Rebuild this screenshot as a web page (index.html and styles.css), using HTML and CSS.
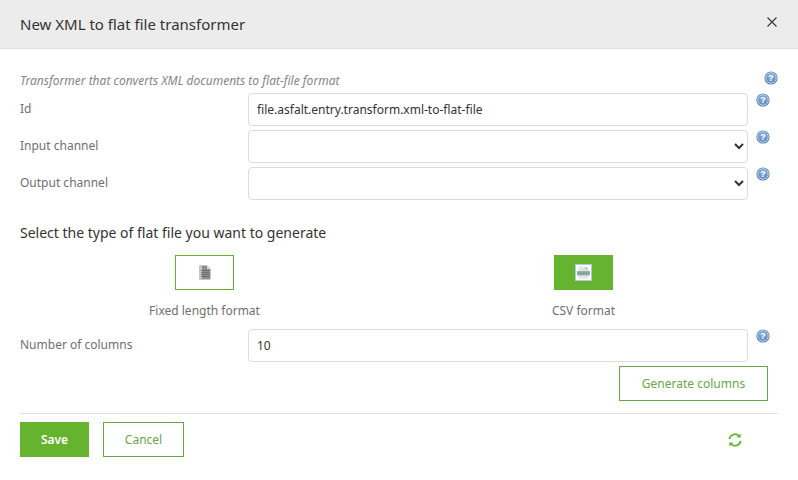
FILE: index.html
```html
<!DOCTYPE html>
<html lang="en">
<head>
  <meta charset="UTF-8">
  <meta name="viewport" content="width=device-width, initial-scale=1.0">
  <title>New XML to flat file transformer</title>
  <link rel="stylesheet" href="styles.css">
</head>
<body>
  <svg class="defs" width="0" height="0">
    <defs>
      <radialGradient id="helpfill" cx="50%" cy="40%" r="60%">
        <stop offset="0" stop-color="#8fb0dc"/>
        <stop offset="1" stop-color="#4f7fb8"/>
      </radialGradient>
      <symbol id="help" viewBox="0 0 14 14">
        <circle cx="7" cy="7" r="6.6" fill="url(#helpfill)"/>
        <circle cx="7" cy="7" r="5.2" fill="none" stroke="#c9daf0" stroke-width="0.9"/>
        <text x="7" y="10.3" text-anchor="middle" class="help-mark">?</text>
      </symbol>
    </defs>
  </svg>

  <header class="modal-head">
    <h1>New XML to flat file transformer</h1>
    <svg class="close" width="10" height="10" viewBox="0 0 10 10"><path d="M0.5 0.5L9.5 9.5M9.5 0.5L0.5 9.5" stroke="#333" stroke-width="1.1" fill="none"/></svg>
  </header>

  <main class="modal-body">
    <div class="desc-row">
      <p class="desc">Transformer that converts XML documents to flat-file format</p>
      <svg class="help"><use href="#help"/></svg>
    </div>

    <div class="row">
      <label>Id</label>
      <input class="field" type="text" value="file.asfalt.entry.transform.xml-to-flat-file">
      <svg class="help"><use href="#help"/></svg>
    </div>
    <div class="row">
      <label>Input channel</label>
      <select class="field"><option></option></select>
      <svg class="help"><use href="#help"/></svg>
    </div>
    <div class="row">
      <label>Output channel</label>
      <select class="field"><option></option></select>
      <svg class="help"><use href="#help"/></svg>
    </div>

    <h2>Select the type of flat file you want to generate</h2>

    <div class="types">
      <div class="type">
        <div class="type-btn">
          <svg width="12" height="15" viewBox="0 0 12 15">
            <path d="M0.5 0.5H8L11.5 4V14.5H0.5Z" fill="#8e8e8e"/>
            <path d="M8 0.5L11.5 4H8Z" fill="#d8d8d8"/>
            <path d="M0.5 0.5H3V14.5H0.5Z" fill="#c4c4c4"/>
            <path d="M2 5.5H10.5M2 7.5H10.5M2 9.5H10.5M2 11.5H10.5" stroke="#6a6a6a" stroke-width="0.8"/>
          </svg>
        </div>
        <span>Fixed length format</span>
      </div>
      <div class="type">
        <div class="type-btn active">
          <svg width="17" height="17" viewBox="0 0 17 17">
            <rect x="0.5" y="0.5" width="16" height="16" fill="#fff" stroke="#b4c4ec"/>
            <path d="M3.5 2.5H10.5L13.5 5.5V14.5H3.5Z" fill="#e4e4e4"/>
            <path d="M10.5 2.5L13.5 5.5H10.5Z" fill="#b5b5b5"/>
            <rect x="2" y="7" width="13" height="4.5" fill="#8fb5ad"/>
            <path d="M3 9.2H14" stroke="#4f7f78" stroke-width="1" stroke-dasharray="1.5 1"/>
          </svg>
        </div>
        <span>CSV format</span>
      </div>
    </div>

    <div class="row">
      <label>Number of columns</label>
      <input class="field" type="text" value="10">
      <svg class="help"><use href="#help"/></svg>
    </div>

    <div class="generate-bar">
      <button class="btn btn-line generate">Generate columns</button>
    </div>

    <footer class="modal-foot">
      <button class="btn btn-main">Save</button>
      <button class="btn btn-line cancel">Cancel</button>
      <svg class="refresh" width="14" height="14" viewBox="0 0 14 14" fill="none" stroke="#65b32e" stroke-width="1.7">
        <path d="M1.4 6A5.6 5.6 0 0 1 11.2 3.2"/>
        <path d="M12.6 8A5.6 5.6 0 0 1 2.8 10.8"/>
        <path d="M12.6 0.6V4.6H8.6Z" fill="#65b32e" stroke="none"/>
        <path d="M1.4 13.4V9.4H5.4Z" fill="#65b32e" stroke="none"/>
      </svg>
    </footer>
  </main>
</body>
</html>
```

FILE: styles.css
```css
*{margin: 0px; padding: 0px; box-sizing: border-box;}
body{
  width: 798px; height: 480px;
  background: #fff;
  font-family: "Noto Sans", "Open Sans", sans-serif;
  font-size: 12px;
  color: #6f6f6f;
  overflow: hidden;
}
.defs{position: absolute;}
.help-mark{font: bold 9.5px "Liberation Sans", sans-serif; fill: #fff;}

/* header */
.modal-head{
  height: 49px;
  padding: 0 21px 0 20px;
  background: #ececec;
  border-bottom: 1px solid #dfdfdf;
  display: flex;
  align-items: center;
  justify-content: space-between;
}
.modal-head h1{font-size: 15px; font-weight: 400; color: #333;}
.close{margin-top: -5px;}

.modal-body{padding: 22px 20px 0;}

/* description */
.desc-row{
  height: 22px;
  display: flex;
  justify-content: space-between;
}
.desc{font-size: 12px; font-style: italic; color: #858585; padding-top: 1px;}

/* form rows */
.row{
  height: 33px;
  margin-bottom: 4px;
  display: flex;
  align-items: flex-start;
}
.row label{width: 228px; padding-top: 7px; color: #6f6f6f;}
.field{
  width: 500px; height: 33px;
  padding: 0 8px;
  background: #fff;
  border: 1px solid #dcdcdc;
  border-radius: 4px;
  font-family: inherit;
  font-size: 12px;
  color: #333;
}
.help{width: 14px; height: 14px; margin-left: 8px;}
.desc-row .help{margin-top: 0;}
.row .help{margin-top: 0;}

h2{
  margin-top: 23px;
  font-size: 14px; font-weight: 400;
  color: #333;
}

/* file type choice */
.types{
  width: 758px;
  margin: 13px 0 10px -5px;
  display: grid;
  grid-template-columns: 1fr 1fr;
}
.type{
  display: flex;
  flex-direction: column;
  align-items: center;
  gap: 12px;
}
.type-btn{
  width: 59px; height: 35px;
  border: 1px solid #65b32e;
  display: flex;
  align-items: center;
  justify-content: center;
}
.type-btn.active{background: #65b32e;}

/* buttons */
.btn{
  height: 35px;
  font-family: inherit;
  font-size: 12px;
  background: #fff;
  border: 1px solid #65a845;
  color: #65a845;
}
.btn-main{width: 69px; background: #65b32e; border-color: #65b32e; color: #fff; font-weight: 600;}
.cancel{width: 81px; margin-left: 14px;}
.generate{width: 149px;}
.generate-bar{
  width: 748px;
  display: flex;
  justify-content: flex-end;
}

.modal-foot{
  margin-top: 12px;
  padding-top: 8px;
  border-top: 1px solid #dfdfdf;
  display: flex;
  align-items: center;
  position: relative;
}
.refresh{margin-left: 544px;}
```
